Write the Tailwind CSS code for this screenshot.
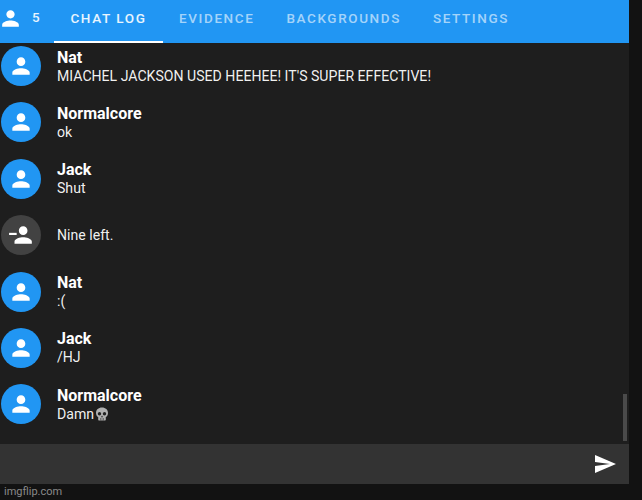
<!DOCTYPE html>
<html lang="en">
<head>
  <meta charset="UTF-8" />
  <meta name="viewport" content="width=device-width, initial-scale=1.0" />
  <title>Chat log</title>
  <script src="https://cdn.jsdelivr.net/npm/@tailwindcss/browser@4"></script>
</head>
<body class="h-[500px] w-[642px] overflow-hidden bg-[#121212] font-['Roboto',sans-serif] text-white">

  <div class="flex h-[484px] w-[629px] flex-col bg-[#1e1e1e]">

    <!-- Tabs -->
    <header class="flex h-[43px] shrink-0 bg-[#2196f3]">
      <div class="flex w-[54px] items-center pb-[6px]">
        <svg class="ml-[-2px] h-[25px] w-[25px] shrink-0" viewBox="0 0 24 24" fill="#fff"><path d="M12 12c2.21 0 4-1.79 4-4s-1.79-4-4-4-4 1.79-4 4 1.79 4 4 4zm0 2c-2.67 0-8 1.34-8 4v2h16v-2c0-2.66-5.33-4-8-4z"/></svg>
        <span class="ml-[9px] text-[13.4px] font-medium text-white/90">5</span>
      </div>
      <div class="flex h-[43px] w-[109px] items-center justify-center border-b-[2px] border-white pb-[4px] text-[13.5px] font-medium tracking-[1.6px] text-white/90">CHAT LOG</div>
      <div class="flex h-[43px] items-center px-[16px] pb-[6px] text-[13.5px] font-medium tracking-[1.6px] text-white/60">EVIDENCE</div>
      <div class="flex h-[43px] items-center px-[16px] pb-[6px] text-[13.5px] font-medium tracking-[1.6px] text-white/60">BACKGROUNDS</div>
      <div class="flex h-[43px] items-center px-[16px] pb-[6px] text-[13.5px] font-medium tracking-[1.6px] text-white/60">SETTINGS</div>
    </header>

    <!-- Messages -->
    <main class="relative flex flex-1 flex-col">
      <div class="flex h-[56.4px] items-center gap-[16px] pt-[3px] pb-[13.4px] pl-[1px]">
        <div class="flex h-[40px] w-[40px] items-center justify-center rounded-full bg-[#2196f3]">
          <svg class="h-[26px] w-[26px]" viewBox="0 0 24 24" fill="#fff"><path d="M12 12c2.21 0 4-1.79 4-4s-1.79-4-4-4-4 1.79-4 4 1.79 4 4 4zm0 2c-2.67 0-8 1.34-8 4v2h16v-2c0-2.66-5.33-4-8-4z"/></svg>
        </div>
        <div>
          <div class="text-[16px] leading-[19px] font-bold">Nat</div>
          <div class="text-[14.1px] leading-[18px] text-white/95">MIACHEL JACKSON USED HEEHEE! IT'S SUPER EFFECTIVE!</div>
        </div>
      </div>
      <div class="flex h-[56.4px] items-center gap-[16px] pt-[3px] pb-[13.4px] pl-[1px]">
        <div class="flex h-[40px] w-[40px] items-center justify-center rounded-full bg-[#2196f3]">
          <svg class="h-[26px] w-[26px]" viewBox="0 0 24 24" fill="#fff"><path d="M12 12c2.21 0 4-1.79 4-4s-1.79-4-4-4-4 1.79-4 4 1.79 4 4 4zm0 2c-2.67 0-8 1.34-8 4v2h16v-2c0-2.66-5.33-4-8-4z"/></svg>
        </div>
        <div>
          <div class="text-[16px] leading-[19px] font-bold">Normalcore</div>
          <div class="text-[14.1px] leading-[18px] text-white/95">ok</div>
        </div>
      </div>
      <div class="flex h-[56.4px] items-center gap-[16px] pt-[3px] pb-[13.4px] pl-[1px]">
        <div class="flex h-[40px] w-[40px] items-center justify-center rounded-full bg-[#2196f3]">
          <svg class="h-[26px] w-[26px]" viewBox="0 0 24 24" fill="#fff"><path d="M12 12c2.21 0 4-1.79 4-4s-1.79-4-4-4-4 1.79-4 4 1.79 4 4 4zm0 2c-2.67 0-8 1.34-8 4v2h16v-2c0-2.66-5.33-4-8-4z"/></svg>
        </div>
        <div>
          <div class="text-[16px] leading-[19px] font-bold">Jack</div>
          <div class="text-[14.1px] leading-[18px] text-white/95">Shut</div>
        </div>
      </div>
      <div class="flex h-[56.4px] items-center gap-[16px] pt-[3px] pb-[13.4px] pl-[1px]">
        <div class="flex h-[40px] w-[40px] items-center justify-center rounded-full bg-[#424242]">
          <svg class="h-[26px] w-[26px]" viewBox="0 0 24 24" fill="#fff"><path d="M14 8c0-2.210-1.790-4-4-4S6 5.790 6 8s1.790 4 4 4 4-1.790 4-4zm-4 6c-2.670 0-8 1.340-8 4v2h16v-2c0-2.660-5.330-4-8-4z" transform="translate(4 0)"/><rect x="1" y="10" width="7" height="2"/></svg>
        </div>
        <div class="text-[14.1px] leading-[18px] text-white/95">Nine left.</div>
      </div>
      <div class="flex h-[56.4px] items-center gap-[16px] pt-[3px] pb-[13.4px] pl-[1px]">
        <div class="flex h-[40px] w-[40px] items-center justify-center rounded-full bg-[#2196f3]">
          <svg class="h-[26px] w-[26px]" viewBox="0 0 24 24" fill="#fff"><path d="M12 12c2.21 0 4-1.79 4-4s-1.79-4-4-4-4 1.79-4 4 1.79 4 4 4zm0 2c-2.67 0-8 1.34-8 4v2h16v-2c0-2.66-5.33-4-8-4z"/></svg>
        </div>
        <div>
          <div class="text-[16px] leading-[19px] font-bold">Nat</div>
          <div class="text-[14.1px] leading-[18px] text-white/95">:(</div>
        </div>
      </div>
      <div class="flex h-[56.4px] items-center gap-[16px] pt-[3px] pb-[13.4px] pl-[1px]">
        <div class="flex h-[40px] w-[40px] items-center justify-center rounded-full bg-[#2196f3]">
          <svg class="h-[26px] w-[26px]" viewBox="0 0 24 24" fill="#fff"><path d="M12 12c2.21 0 4-1.79 4-4s-1.79-4-4-4-4 1.79-4 4 1.79 4 4 4zm0 2c-2.67 0-8 1.34-8 4v2h16v-2c0-2.66-5.33-4-8-4z"/></svg>
        </div>
        <div>
          <div class="text-[16px] leading-[19px] font-bold">Jack</div>
          <div class="text-[14.1px] leading-[18px] text-white/95">/HJ</div>
        </div>
      </div>
      <div class="flex h-[56.4px] items-center gap-[16px] pt-[3px] pb-[13.4px] pl-[1px]">
        <div class="flex h-[40px] w-[40px] items-center justify-center rounded-full bg-[#2196f3]">
          <svg class="h-[26px] w-[26px]" viewBox="0 0 24 24" fill="#fff"><path d="M12 12c2.21 0 4-1.79 4-4s-1.79-4-4-4-4 1.79-4 4 1.79 4 4 4zm0 2c-2.67 0-8 1.34-8 4v2h16v-2c0-2.66-5.33-4-8-4z"/></svg>
        </div>
        <div>
          <div class="text-[16px] leading-[19px] font-bold">Normalcore</div>
          <div class="flex items-center text-[14.1px] leading-[18px] text-white/95">Damn
            <svg class="ml-[1px] h-[14px] w-[14px]" viewBox="0 0 14 14"><path fill="#b0b0b0" d="M7 0.5C3.4 0.5 1 2.8 1 6c0 1.9.8 3.300 2.200 4.100V12.500c0 .6.4 1 1 1h5.600c.6 0 1-.4 1-1v-2.400C12.200 9.300 13 7.900 13 6c0-3.200-2.400-5.500-6-5.500z"/><circle cx="4.500" cy="6.800" r="1.700" fill="#222"/><circle cx="9.500" cy="6.800" r="1.700" fill="#222"/><path fill="#222" d="M7 8.500l1 1.800H6z"/><path stroke="#444" stroke-width=".6" d="M5.500 11v2.500M7 11v2.500M8.500 11v2.500"/></svg>
          </div>
        </div>
      </div>

      <!-- Scrollbar -->
      <div class="absolute top-[351px] right-[2px] h-[47px] w-[4px] bg-[#4a4a4a]"></div>
    </main>

    <!-- Input -->
    <footer class="flex h-[40px] shrink-0 items-center justify-end bg-[#333333] pr-[12px]">
      <svg class="h-[24px] w-[24px]" viewBox="0 0 24 24" fill="#fff"><path d="M2.010 21 23 12 2.010 3 2 10l15 2-15 2z"/></svg>
    </footer>
  </div>

  <!-- Watermark -->
  <div class="flex h-[16px] items-center pl-[4px] text-[11px] text-[#8a8a8a]">imgflip.com</div>
</body>
</html>
